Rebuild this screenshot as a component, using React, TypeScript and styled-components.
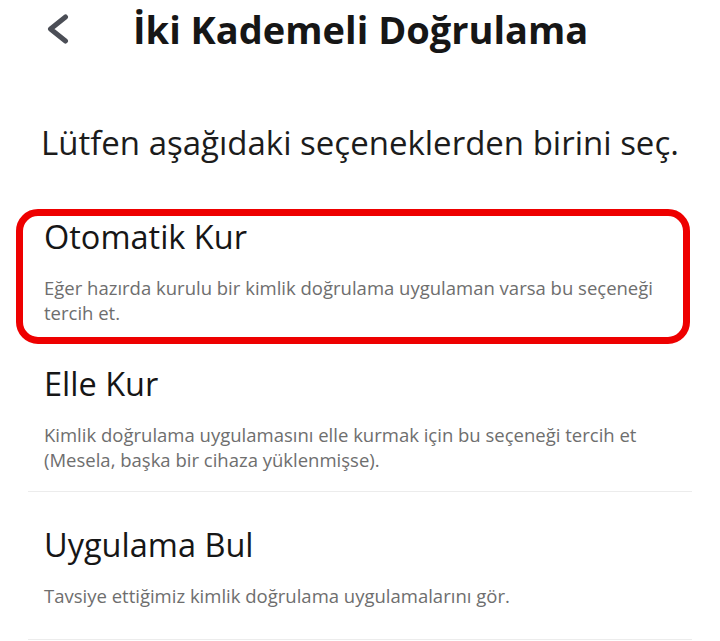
import React from "react";
import styled, { createGlobalStyle } from "styled-components";

const GlobalStyle = createGlobalStyle`
  body {
    margin: 0;
    background: #ffffff;
    font-family: "Open Sans", "Noto Sans", sans-serif;
    color: #161616;
  }
  * {
    box-sizing: border-box;
  }
`;

const Page = styled.div`
  width: 720px;
  height: 641px;
  overflow: hidden;
  background: #fff;
`;

const Header = styled.header`
  display: flex;
  align-items: center;
  height: 58px;
  padding-left: 46px;
`;

const BackButton = styled.button`
  border: none;
  background: none;
  padding: 0;
  width: 26px;
  height: 36px;
  display: flex;
  align-items: center;
  justify-content: center;
  cursor: pointer;
`;

const Title = styled.h1`
  margin: 0 0 0 61px;
  font-size: 38px;
  font-weight: 700;
  color: #161616;
`;

const Prompt = styled.p`
  margin: 62px 0 0 41px;
  font-size: 33px;
  font-weight: 400;
  color: #1c1c1c;
`;

const OptionList = styled.div`
  display: flex;
  flex-direction: column;
  margin-top: 44px;
  padding: 0 28px;
`;

const Option = styled.div<{ $highlighted?: boolean }>`
  display: flex;
  flex-direction: column;
  justify-content: center;
  cursor: pointer;
  ${({ $highlighted }) =>
    $highlighted
      ? `
    margin: 0 2px 0 -12px;
    padding: 0 20px 12px 21px;
    border: 7px solid #ee0000;
    border-radius: 22px;
  `
      : `
    height: 148px;
    padding: 0 15px 0 16px;
    border-bottom: 1px solid #ececec;
  `}
`;

const OptionTitle = styled.div`
  font-size: 32.5px;
  line-height: 42px;
  color: #161616;
`;

const OptionText = styled.div`
  margin-top: 17px;
  font-size: 18.5px;
  line-height: 25px;
  color: #6e6e6e;
`;

const options = [
  {
    title: "Otomatik Kur",
    text: "Eğer hazırda kurulu bir kimlik doğrulama uygulaman varsa bu seçeneği tercih et.",
    highlighted: true,
  },
  {
    title: "Elle Kur",
    text: "Kimlik doğrulama uygulamasını elle kurmak için bu seçeneği tercih et (Mesela, başka bir cihaza yüklenmişse).",
  },
  {
    title: "Uygulama Bul",
    text: "Tavsiye ettiğimiz kimlik doğrulama uygulamalarını gör.",
  },
];

const App: React.FC = () => {
  return (
    <Page>
      <GlobalStyle />
      <Header>
        <BackButton aria-label="Geri">
          <svg width="24" height="32" viewBox="0 0 24 32">
            <path
              d="M18.5 4 L3.5 16 L18.5 28"
              fill="none"
              stroke="#4b4e56"
              strokeWidth="5"
              strokeLinecap="round"
              strokeLinejoin="round"
            />
          </svg>
        </BackButton>
        <Title>İki Kademeli Doğrulama</Title>
      </Header>
      <Prompt>Lütfen aşağıdaki seçeneklerden birini seç.</Prompt>
      <OptionList>
        {options.map((o) => (
          <Option key={o.title} $highlighted={o.highlighted}>
            <OptionTitle>{o.title}</OptionTitle>
            <OptionText>{o.text}</OptionText>
          </Option>
        ))}
      </OptionList>
    </Page>
  );
};

export default App;
